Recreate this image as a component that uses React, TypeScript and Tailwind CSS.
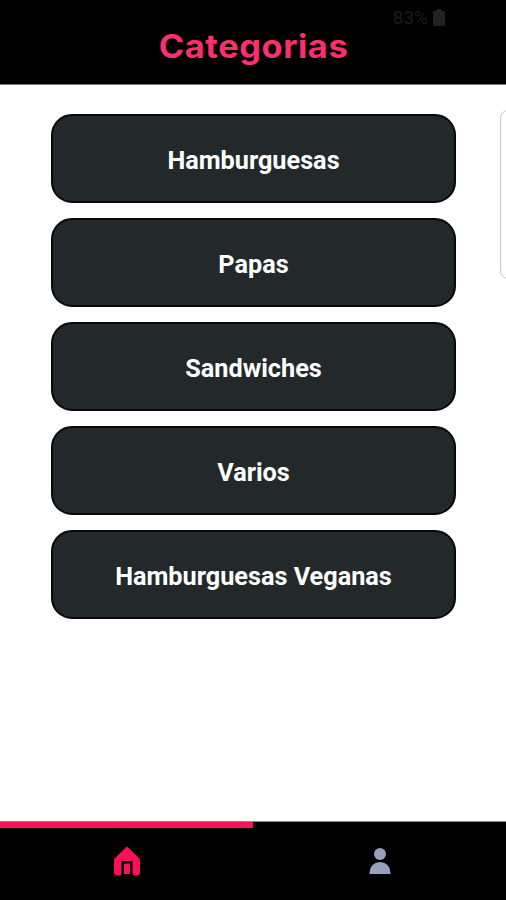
const categories = ["Hamburguesas", "Papas", "Sandwiches", "Varios", "Hamburguesas Veganas"];

function Header() {
  return (
    <header className="h-[85px] shrink-0 border-b border-[#777777] bg-black">
      <div className="flex h-[30px] items-start justify-end gap-[5px] pt-[6px] pr-[61px] font-[Roboto,sans-serif] text-[19px] leading-[24px] text-[#1c1c1c]">
        <span>83%</span>
        <svg className="mt-[3px]" width="12" height="17" viewBox="0 0 12 17" fill="#222222">
          <path d="M3.500 0h5v2H11a1 1 0 0 1 1 1v12.500a1.500 1.500 0 0 1-1.500 1.500h-9A1.500 1.500 0 0 1 0 15.500V3a1 1 0 0 1 1-1h2.500z" />
        </svg>
      </div>
      <h1 className="flex h-[34px] scale-x-[1.06] items-center justify-center pl-[1px] font-[Inter,sans-serif] text-[32.5px] leading-[34px] font-bold tracking-[0.5px] text-[#fb2f6d]">
        Categorias
      </h1>
    </header>
  );
}

function CategoryButton({ label }: { label: string }) {
  return (
    <button className="flex h-[89px] w-[405px] shrink-0 items-center justify-center rounded-[21px] border-2 border-[#060809] bg-[#23282a] pt-[4px] font-[Roboto,sans-serif] text-[25.25px] leading-[30px] font-bold text-white">
      {label}
    </button>
  );
}

function TabBar() {
  return (
    <nav className="grid h-[79px] shrink-0 grid-cols-2 border-t border-[#888888] bg-black">
      <div className="flex flex-col items-center">
        <div className="h-[6px] w-full bg-[#fb1158]" />
        <svg className="mt-[18px]" width="28" height="31" viewBox="0 0 28 31" fill="#fb1158">
          <path d="M14 0.500 26 12Q27 13 27 14.500V26.500Q27 29.500 24 29.500H21.500Q19.500 29.500 19.500 27.500V15H8.500V27.500Q8.500 29.500 6.500 29.500H4Q1 29.500 1 26.500V14.500Q1 13 2 12Z" />
          <path d="M11 17.500h6V28h-6z" />
        </svg>
      </div>
      <div className="flex justify-center">
        <svg className="mt-[25px]" width="24" height="29" viewBox="0 0 24 29" fill="#98a1b9">
          <circle cx="12" cy="7" r="6" />
          <path d="M1.500 27V25.500a10.500 10.500 0 0 1 21 0V27z" />
        </svg>
      </div>
    </nav>
  );
}

export default function App() {
  return (
    <div className="flex h-[900px] w-[506px] flex-col overflow-hidden bg-white">
      <Header />
      <main className="flex min-h-0 flex-1 items-start overflow-hidden">
        <div className="ml-[51px] flex w-[405px] shrink-0 flex-col gap-[15px] pt-[29px]">
          {categories.map((label) => (
            <CategoryButton key={label} label={label} />
          ))}
        </div>
        <div className="mt-[25px] ml-[44px] h-[169px] w-[200px] shrink-0 rounded-[8px] border border-[#c9c9c9]" />
      </main>
      <TabBar />
    </div>
  );
}
